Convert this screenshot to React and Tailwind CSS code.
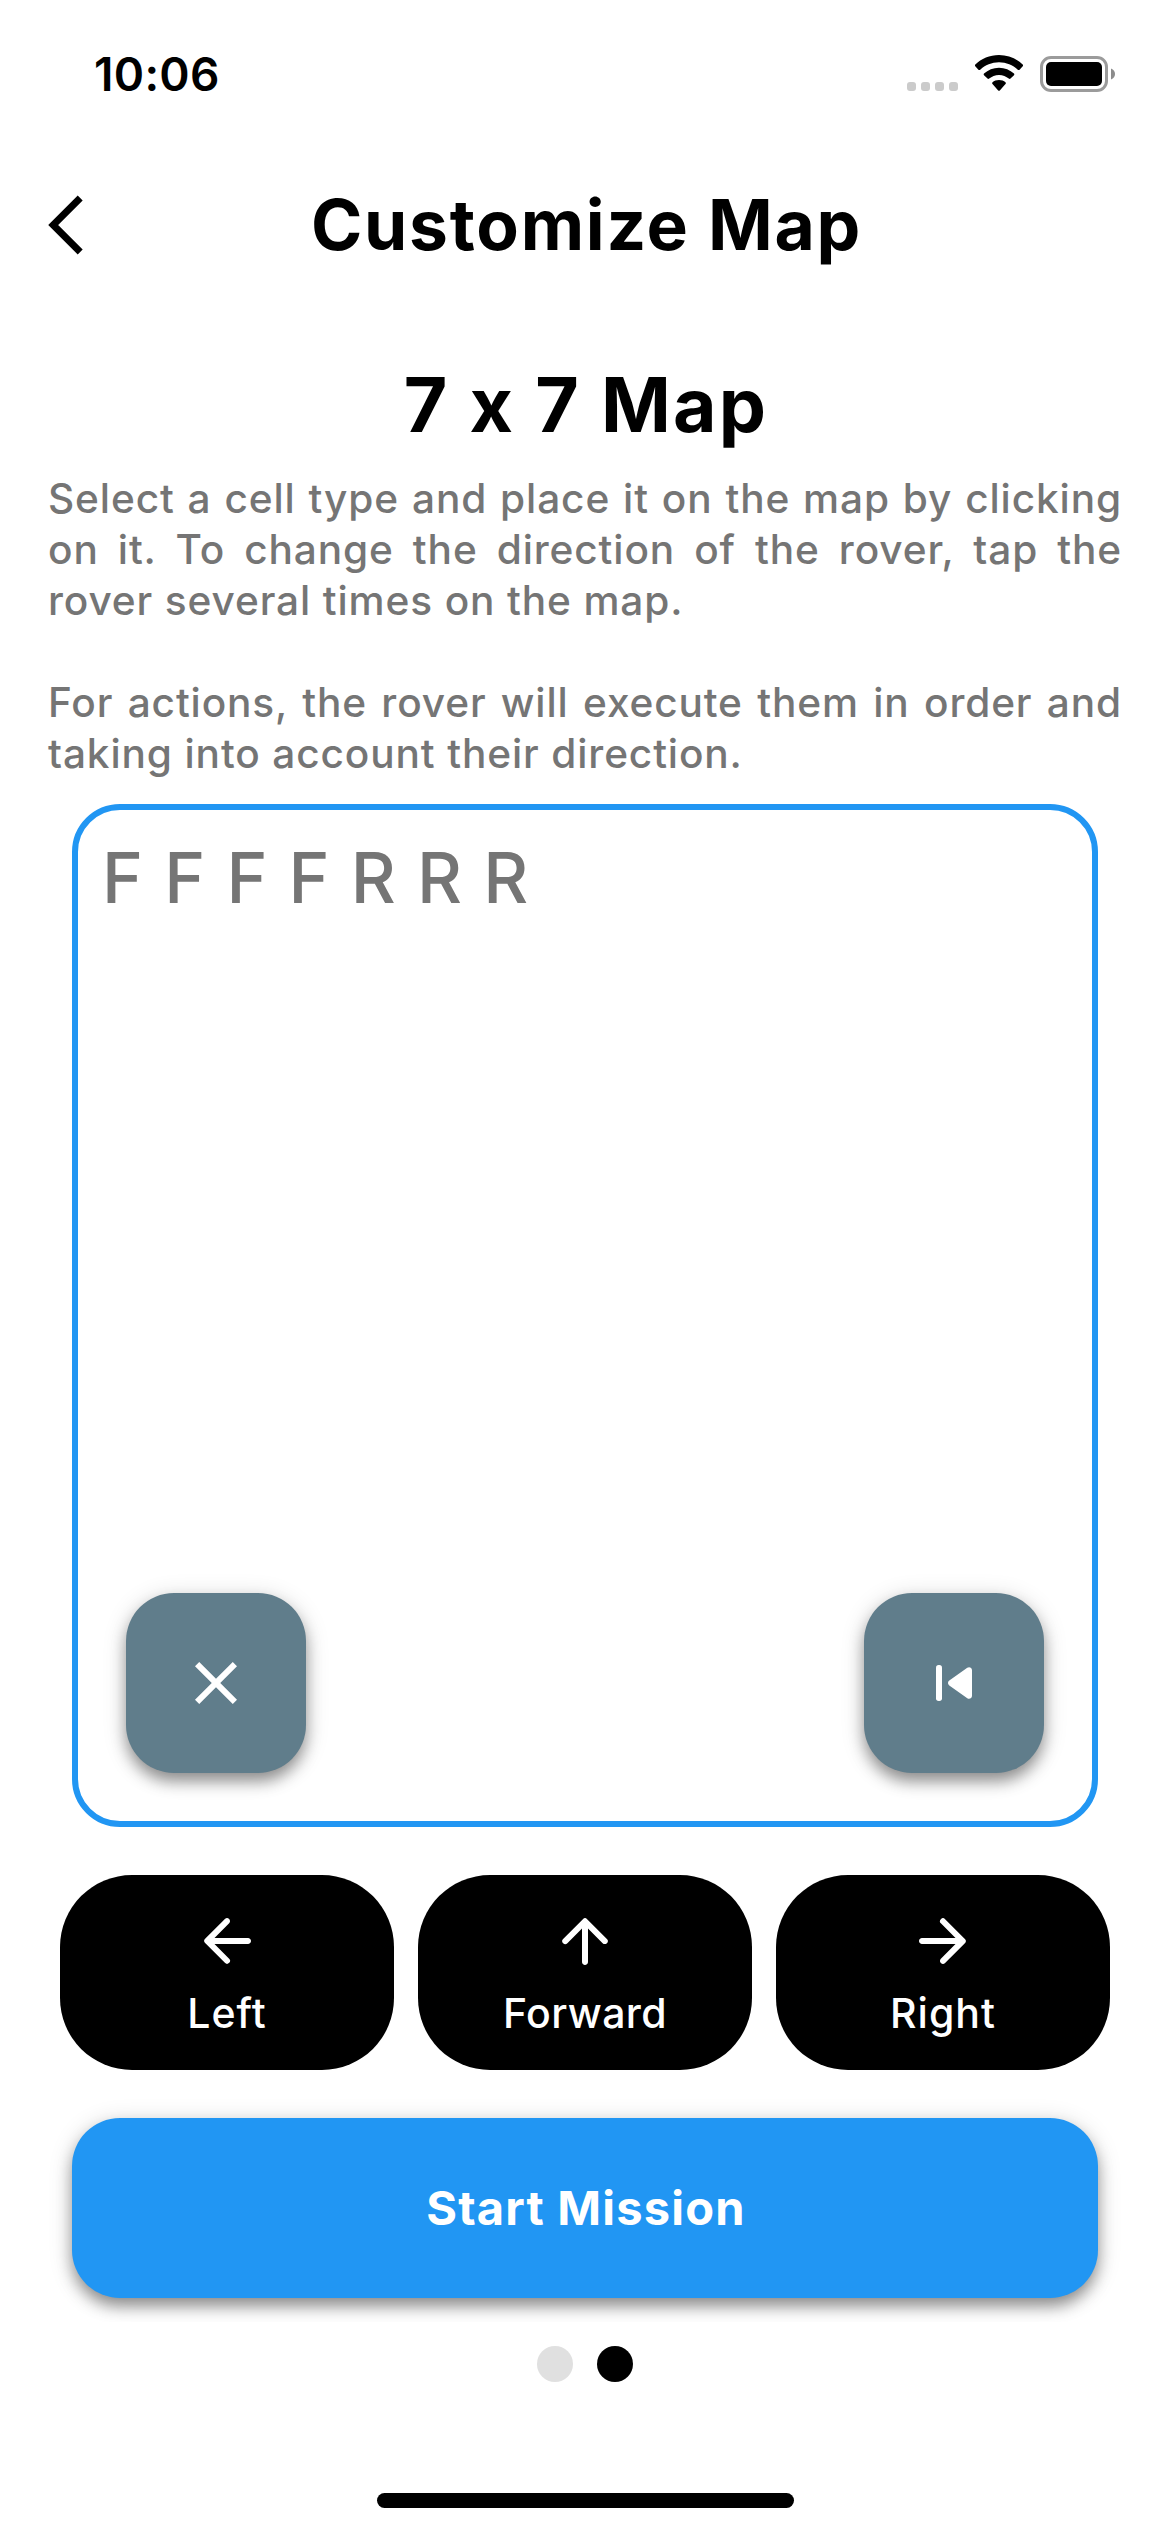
const ARROW =
  "M19 11H7.83l4.88-4.88c.39-.39.39-1.03 0-1.42a.996.996 0 0 0-1.41 0l-6.59 6.59a.996.996 0 0 0 0 1.41l6.59 6.59a.996.996 0 1 0 1.41-1.41L7.83 13H19c.55 0 1-.45 1-1s-.45-1-1-1z";
const CLOSE =
  "M19 6.41 17.59 5 12 10.59 6.41 5 5 6.41 10.59 12 5 17.59 6.41 19 12 13.41 17.59 19 19 17.59 13.41 12z";

function Icon({ path, className = "" }) {
  return (
    <svg viewBox="0 0 24 24" className={`size-[72px] shrink-0 ${className}`} fill="currentColor">
      <path d={path} />
    </svg>
  );
}

function SkipPreviousIcon() {
  return (
    <svg viewBox="0 0 24 24" className="size-[72px] shrink-0" fill="currentColor">
      <rect x="6" y="6" width="2" height="12" rx="0.9" />
      <path d="M10.43 11.18 16.43 6.95C17.1 6.48 18 6.95 18 7.77V16.23C18 17.05 17.1 17.52 16.43 17.05L10.43 12.82C9.86 12.42 9.86 11.58 10.43 11.18Z" />
    </svg>
  );
}

function StatusBar() {
  return (
    <div className="flex h-[141px] items-start justify-between pl-[94px] pr-[55px]">
      <span className="mt-[46px] text-[46px] leading-[56px] font-semibold tracking-[0.3px]">10:06</span>
      <div className="mt-[55px] flex h-[37px] items-end">
        <div className="mb-px mr-[17px] flex gap-[5px]">
          {[0, 1, 2, 3].map((i) => (
            <span key={i} className="size-[9px] rounded-[3px] bg-[#cbcbcb]" />
          ))}
        </div>
        <svg width="48" height="37" viewBox="0 0 48 37" className="mr-[17px]">
          <path d="M24 0C33.3 0 41.7 3.7 47.7 9.6Q48.5 10.5 47.7 11.3L44.6 14.7Q43.7 15.5 42.8 14.7C37.8 10 31.3 7.2 24 7.2S10.2 10 5.2 14.7Q4.3 15.5 3.4 14.7L.3 11.3Q-.5 10.5 .3 9.6C6.3 3.7 14.7 0 24 0Z" />
          <path d="M24 12.7C29.8 12.7 35 14.9 39 18.5Q39.8 19.4 39 20.2L35.5 23.6Q34.7 24.4 33.8 23.6C31.2 21.3 27.8 19.9 24 19.9S16.8 21.3 14.2 23.6Q13.3 24.4 12.5 23.6L9 20.2Q8.2 19.4 9 18.5C13 14.9 18.2 12.7 24 12.7Z" />
          <path d="M24 25C26.7 25 28.8 25.9 30.5 27.3Q31.4 28.2 30.5 29L24.8 35.4Q24 36.2 23.2 35.4L17.5 29Q16.6 28.2 17.5 27.3C19.2 25.9 21.3 25 24 25Z" />
        </svg>
        <svg width="75" height="36" viewBox="0 0 75 36">
          <rect x="1.5" y="1.5" width="65" height="33" rx="9.5" fill="none" stroke="#9b9b9b" strokeWidth="3" />
          <rect x="6" y="6" width="56" height="24" rx="5" />
          <path d="M71 12.5Q75 14.2 75 18T71 23.5Z" fill="#8c8c8c" />
        </svg>
      </div>
    </div>
  );
}

function SquareButton({ label, children }) {
  return (
    <button
      aria-label={label}
      className="flex size-[180px] items-center justify-center rounded-[48px] bg-[#607d8b] text-white shadow-[0_9px_15px_-1px_rgba(0,0,0,0.38),0_4px_24px_rgba(0,0,0,0.16)]"
    >
      {children}
    </button>
  );
}

function MoveButton({ label, rotate, tracking }) {
  return (
    <button className="flex h-[195px] flex-1 flex-col items-center rounded-[72px] bg-black pt-[30px] text-white">
      <Icon path={ARROW} className={rotate} />
      <span className={`mt-[11px] text-[41px] leading-[50px] font-medium ${tracking}`}>{label}</span>
    </button>
  );
}

export default function App() {
  return (
    <div className="flex h-[2532px] w-[1170px] flex-col overflow-hidden bg-white font-['Inter',sans-serif] text-black [font-feature-settings:'calt'_0]">
      <StatusBar />

      <header className="grid h-[168px] grid-cols-[120px_1fr_120px] items-center">
        <svg width="36" height="60" viewBox="0 0 36 60" className="ml-[48px]" fill="none" stroke="currentColor" strokeWidth="7">
          <path d="M32.2 3 5.2 30 32.2 57" />
        </svg>
        <h1 className="pl-[3px] text-center text-[69.5px] leading-[84px] font-bold tracking-[1.75px] whitespace-nowrap">
          Customize Map
        </h1>
      </header>

      <h2 className="mt-[51px] pl-[2px] text-center text-[75px] leading-[90px] font-bold tracking-[2.2px]">7 x 7 Map</h2>

      <div className="mt-[23px] px-[48px] text-justify text-[40.6px] leading-[51px] font-[450] tracking-[0.88px] text-[#757575]">
        <p>
          Select a cell type and place it on the map by clicking on it. To change the direction of the rover, tap the
          rover several times on the map.
        </p>
        <p className="mt-[51px]">
          For actions, the rover will execute them in order and taking into account their direction.
        </p>
      </div>

      <div className="overflow-hidden pb-[24px]">
        <section className="mx-[72px] mt-[25px] flex h-[1023px] flex-col justify-between rounded-[48px] border-[6px] border-[#2196f3] pt-[26px] pb-[48px]">
          <p className="pl-[24px] text-[69.5px] leading-[84px] font-[450] tracking-[1.35px] text-[#757575]">F F F F R R R</p>
          <div className="flex justify-between px-[48px]">
            <SquareButton label="Clear">
              <Icon path={CLOSE} />
            </SquareButton>
            <SquareButton label="Undo">
              <SkipPreviousIcon />
            </SquareButton>
          </div>
        </section>

        <div className="mt-[48px] flex gap-[24px] px-[60px]">
          <MoveButton label="Left" rotate="" tracking="tracking-[1px]" />
          <MoveButton label="Forward" rotate="rotate-90" tracking="tracking-[0.4px]" />
          <MoveButton label="Right" rotate="rotate-180" tracking="tracking-[1px]" />
        </div>

        <div className="mt-[48px] flex px-[72px]">
          <button className="h-[180px] flex-1 rounded-[48px] bg-[#2196f3] pl-[2px] text-[47px] font-bold tracking-[1.2px] text-white shadow-[0_9px_15px_-1px_rgba(0,0,0,0.38),0_4px_24px_rgba(0,0,0,0.16)]">
            Start Mission
          </button>
        </div>
      </div>

      <div className="mt-[24px] flex justify-center gap-[24px]">
        <span className="size-[36px] rounded-full bg-[#e0e0e0]" />
        <span className="size-[36px] rounded-full bg-black" />
      </div>

      <div className="mx-auto mt-[111px] h-[15px] w-[417px] rounded-full bg-black" />
    </div>
  );
}
